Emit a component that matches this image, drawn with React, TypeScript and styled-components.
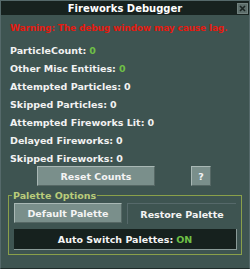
import React from "react";
import styled, { createGlobalStyle } from "styled-components";

const Global = createGlobalStyle`
  html, body { margin: 0; padding: 0; background: #3e5451; }
  body { width: 250px; height: 269px; overflow: hidden; }
  * { box-sizing: border-box; }
`;

const Window = styled.div`
  width: 250px;
  height: 269px;
  background: #3e5451;
  border: 1px solid #55696a;
  border-bottom-color: #1f2c2a;
  display: flex;
  flex-direction: column;
  font-family: "DejaVu Sans", sans-serif;
  font-weight: bold;
  font-size: 9.5px;
  color: #f2f2f2;
`;

const TitleBar = styled.div`
  height: 14px;
  background: #17221f;
  display: flex;
  align-items: center;
  justify-content: center;
  position: relative;
  font-size: 10px;
  color: #ffffff;
`;

const CloseButton = styled.div`
  position: absolute;
  right: 1px;
  top: 2px;
  width: 11px;
  height: 11px;
  background: #5d6e6b;
  border: 1px solid #71817e;
  display: flex;
  align-items: center;
  justify-content: center;
`;

const Body = styled.div`
  display: flex;
  flex-direction: column;
  padding: 8px 0 0 9px;
`;

const Warning = styled.div`
  color: #e41a10;
  height: 18px;
  font-size: 9px;
  letter-spacing: -0.15px;
  white-space: nowrap;
`;

const Row = styled.div`
  height: 18px;
  display: flex;
  align-items: center;
`;

const Value = styled.span<{ $green?: boolean }>`
  margin-left: 3px;
  color: ${(p) => (p.$green ? "#6fc046" : "#f2f2f2")};
`;

const ButtonRow = styled.div`
  display: flex;
  margin-top: -1px;
  padding-left: 27px;
  gap: 36px;
`;

const GrayButton = styled.div<{ $w: number }>`
  width: ${(p) => p.$w}px;
  height: 20px;
  background: #7a8f8b;
  border-top: 1px solid #a9b8b5;
  border-left: 1px solid #a9b8b5;
  border-right: 1px solid #566865;
  border-bottom: 1px solid #566865;
  display: flex;
  align-items: center;
  justify-content: center;
  color: #f4f4f4;
`;

const Fieldset = styled.fieldset`
  margin: 4px 0 0 -2px;
  width: 233px;
  height: 65px;
  border: 1px solid #8aa04a;
  padding: 2px 4px 0 5px;
  display: flex;
  flex-direction: column;
  gap: 5px;
`;

const Legend = styled.legend`
  padding: 0 1px;
  color: #b9cb7a;
  font-size: 9.5px;
  margin-left: -2px;
`;

const PaletteRow = styled.div`
  display: flex;
  gap: 5px;
`;

const RestoreButton = styled.div`
  width: 109px;
  height: 21px;
  border-top: 1px solid #56696a;
  border-left: 1px solid #56696a;
  display: flex;
  align-items: center;
  justify-content: center;
  color: #f4f4f4;
`;

const AutoBox = styled.div`
  height: 21px;
  width: 223px;
  background: #16211e;
  border-right: 1px solid #8a9b98;
  border-bottom: 1px solid #8a9b98;
  display: flex;
  align-items: center;
  justify-content: center;
  color: #f4f4f4;
`;

const On = styled.span`
  color: #6fc046;
  margin-left: 3px;
`;

const rows: [string, boolean][] = [
  ["ParticleCount:", true],
  ["Other Misc Entities:", true],
  ["Attempted Particles:", false],
  ["Skipped Particles:", false],
  ["Attempted Fireworks Lit:", false],
  ["Delayed Fireworks:", false],
  ["Skipped Fireworks:", false],
];

export default function App() {
  return (
    <>
      <Global />
      <Window>
        <TitleBar>
          Fireworks Debugger
          <CloseButton>
            <svg width="7" height="7" viewBox="0 0 7 7">
              <path d="M1 1 L6 6 M6 1 L1 6" stroke="#1a2422" strokeWidth="1.6" />
            </svg>
          </CloseButton>
        </TitleBar>
        <Body>
          <Warning>Warning: The debug window may cause lag.</Warning>
          {rows.map(([label, green]) => (
            <Row key={label}>
              {label}
              <Value $green={green}>0</Value>
            </Row>
          ))}
          <ButtonRow>
            <GrayButton $w={118}>Reset Counts</GrayButton>
            <GrayButton $w={20}>?</GrayButton>
          </ButtonRow>
          <Fieldset>
            <Legend>Palette Options</Legend>
            <PaletteRow>
              <GrayButton $w={108}>Default Palette</GrayButton>
              <RestoreButton>Restore Palette</RestoreButton>
            </PaletteRow>
            <AutoBox>
              Auto Switch Palettes:<On>ON</On>
            </AutoBox>
          </Fieldset>
        </Body>
      </Window>
    </>
  );
}
